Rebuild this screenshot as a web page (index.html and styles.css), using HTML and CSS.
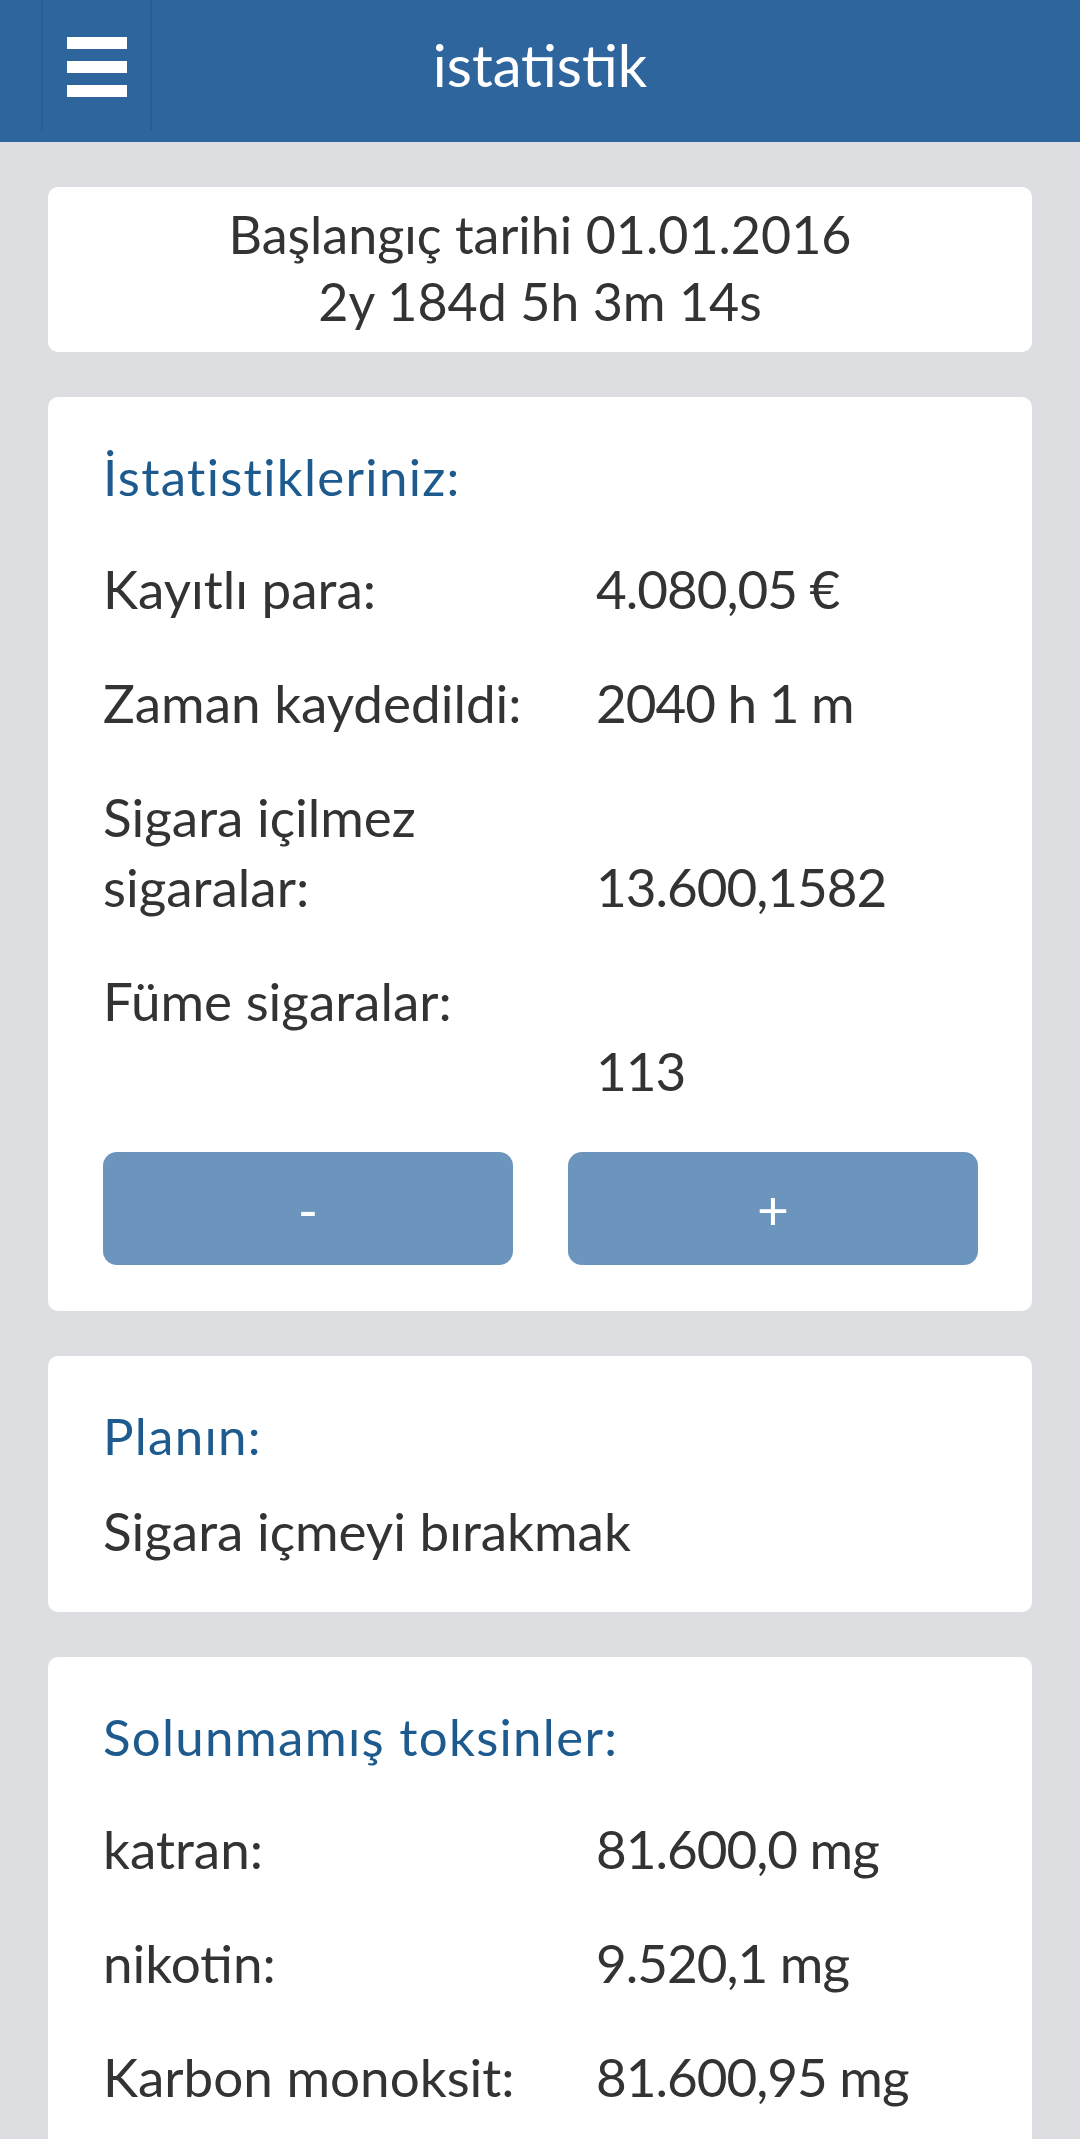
FILE: index.html
```html
<!DOCTYPE html>
<html lang="tr">
<head>
    <meta charset="UTF-8">
    <meta name="viewport" content="width=device-width, initial-scale=1.0">
    <title>istatistik</title>
    <link rel="stylesheet" href="styles.css">
</head>
<body>
    <div class="toolbar">
        <div class="menu-button">
            <svg class="menu-icon" width="60" height="60" viewBox="0 0 60 60">
                <rect x="0" y="0" width="60" height="12" fill="#ffffff"/>
                <rect x="0" y="24" width="60" height="12" fill="#ffffff"/>
                <rect x="0" y="48" width="60" height="12" fill="#ffffff"/>
            </svg>
        </div>
        <h1 class="toolbar-title">istatistik</h1>
    </div>

    <div class="content">
        <div class="card start-card">
            <div>Başlangıç tarihi 01.01.2016</div>
            <div>2y 184d 5h 3m 14s</div>
        </div>

        <div class="card">
            <h2 class="card-title">İstatistikleriniz:</h2>
            <div class="stat-list">
                <div class="stat-row">
                    <div class="stat-label">Kayıtlı para:</div>
                    <div class="stat-value">4.080,05 €</div>
                </div>
                <div class="stat-row">
                    <div class="stat-label">Zaman kaydedildi:</div>
                    <div class="stat-value">2040 h 1 m</div>
                </div>
                <div class="stat-row">
                    <div class="stat-label">Sigara içilmez sigaralar:</div>
                    <div class="stat-value">13.600,1582</div>
                </div>
                <div class="stat-row stat-row-split">
                    <div class="stat-label">Füme sigaralar:</div>
                    <div class="stat-value">113</div>
                </div>
            </div>
            <div class="button-group">
                <button class="count-button">-</button>
                <button class="count-button">+</button>
            </div>
        </div>

        <div class="card">
            <h2 class="card-title">Planın:</h2>
            <div class="plan-text">Sigara içmeyi bırakmak</div>
        </div>

        <div class="card">
            <h2 class="card-title">Solunmamış toksinler:</h2>
            <div class="stat-list">
                <div class="stat-row">
                    <div class="stat-label">katran:</div>
                    <div class="stat-value">81.600,0 mg</div>
                </div>
                <div class="stat-row">
                    <div class="stat-label">nikotin:</div>
                    <div class="stat-value">9.520,1 mg</div>
                </div>
                <div class="stat-row">
                    <div class="stat-label">Karbon monoksit:</div>
                    <div class="stat-value">81.600,95 mg</div>
                </div>
            </div>
        </div>
    </div>
</body>
</html>
```

FILE: styles.css
```css
body {
    margin: 0;
    background-color: #dcdee2;
    color: #333333;
    font-family: 'Lato', 'Open Sans', sans-serif;
}

/* top bar */
.toolbar {
    height: 142px;
    padding-bottom: 12px;
    box-sizing: border-box;
    background-color: #2e659d;
    display: grid;
    grid-template-columns: 152px 1fr 152px;
}

.menu-button {
    margin-left: 41px;
    border-left: 2px solid #2a5c8f;
    border-right: 2px solid #2a5c8f;
    display: flex;
    align-items: center;
    justify-content: center;
}

.menu-icon {
    display: block;
    margin-top: 4px;
}

.toolbar-title {
    margin: 0;
    color: white;
    font-weight: normal;
    font-size: 58px;
    line-height: 130px;
    text-align: center;
}

/* cards */
.content {
    padding: 45px 48px;
    display: flex;
    flex-direction: column;
    gap: 45px;
}

.card {
    background-color: white;
    border-radius: 10px;
    padding: 45px 54px 46px 55px;
}

.start-card {
    padding: 14px 0 17px;
    text-align: center;
    font-size: 52px;
    line-height: 67px;
}

.card-title {
    margin: 0;
    color: #1d5a8e;
    font-weight: normal;
    font-size: 51px;
    letter-spacing: 1.3px;
    line-height: 70px;
}

.stat-list {
    margin-top: 42px;
    display: flex;
    flex-direction: column;
    gap: 44px;
}

.stat-row {
    display: grid;
    grid-template-columns: 493px 1fr;
    align-items: end;
    font-size: 53px;
    line-height: 70px;
}

.stat-value {
    letter-spacing: -1px;
}

.stat-row-split .stat-label {
    align-self: start;
}

.stat-row-split .stat-value {
    margin-top: 70px;
}

.plan-text {
    margin-top: 25px;
    font-size: 53px;
    line-height: 70px;
}

.button-group {
    margin-top: 46px;
    display: flex;
    gap: 55px;
}

.count-button {
    flex: 1;
    height: 113px;
    border: none;
    border-radius: 14px;
    background-color: #6b95bc;
    color: white;
    font-family: 'Lato', 'Open Sans', sans-serif;
    font-size: 55px;
    padding: 0;
}
```
